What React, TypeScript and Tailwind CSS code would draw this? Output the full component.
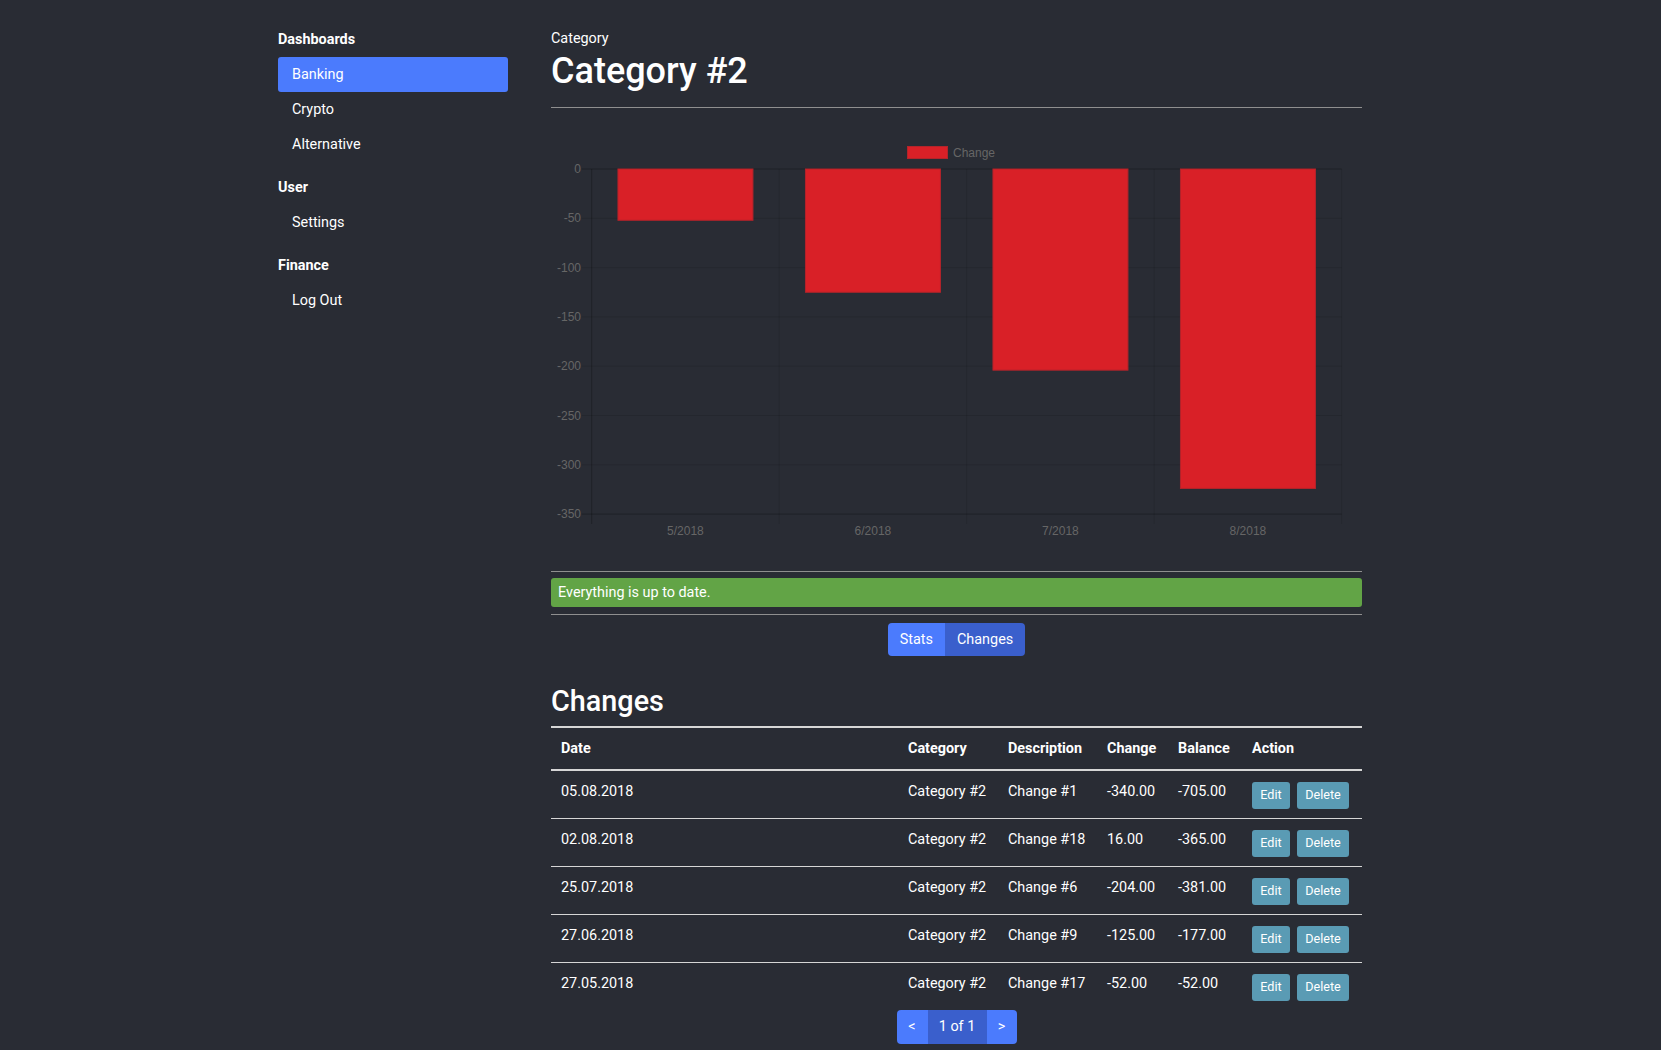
import React from "react";

const NAV = [
  { title: "Dashboards", links: ["Banking", "Crypto", "Alternative"] },
  { title: "User", links: ["Settings"] },
  { title: "Finance", links: ["Log Out"] },
];

const MONTHS = [
  { label: "5/2018", value: -52 },
  { label: "6/2018", value: -125 },
  { label: "7/2018", value: -204 },
  { label: "8/2018", value: -324 },
];

const ROWS = [
  { date: "05.08.2018", desc: "Change #1", change: "-340.00", balance: "-705.00" },
  { date: "02.08.2018", desc: "Change #18", change: "16.00", balance: "-365.00" },
  { date: "25.07.2018", desc: "Change #6", change: "-204.00", balance: "-381.00" },
  { date: "27.06.2018", desc: "Change #9", change: "-125.00", balance: "-177.00" },
  { date: "27.05.2018", desc: "Change #17", change: "-52.00", balance: "-52.00" },
];

function Sidebar() {
  return (
    <aside className="w-[230px] shrink-0 mt-px">
      {NAV.map((sec, i) => (
        <div key={sec.title} className={i > 0 ? "mt-[16px]" : ""}>
          <div className="h-5 leading-5 text-[14.4px] font-bold mb-[7px]">{sec.title}</div>
          {sec.links.map((l) => (
            <div
              key={l}
              className={`h-[35px] pt-px px-[14px] flex items-center rounded-[3px] text-[14.4px] ${
                l === "Banking" ? "bg-[#4b7bfd]" : ""
              }`}
            >
              {l}
            </div>
          ))}
        </div>
      ))}
    </aside>
  );
}

function Chart() {
  const x0 = 40.7;
  const cw = 187.5;
  const zero = 39;
  const k = 0.986;
  const ticks = [0, -50, -100, -150, -200, -250, -300, -350];
  return (
    <svg width="811" height="415" className="block" style={{ fontFamily: "'Liberation Sans', Arial, sans-serif" }}>
      {/* legend */}
      <rect x="356.5" y="16.5" width="40" height="12" fill="#d92027" stroke="#b3242a" />
      <text x="402" y="27" fontSize="12" fill="#666">Change</text>

      {/* horizontal grid */}
      {ticks.map((t) => {
        const y = zero - t * k;
        return (
          <g key={t}>
            <line
              x1={x0 - 10}
              x2={x0 + cw * 4}
              y1={y}
              y2={y}
              stroke={t === 0 || t === -350 ? "rgba(0,0,0,0.25)" : "rgba(0,0,0,0.1)"}
            />
            <text x="30" y={y + 4} fontSize="12" fill="#666" textAnchor="end">
              {t}
            </text>
          </g>
        );
      })}

      {/* vertical grid */}
      {[0, 1, 2, 3, 4].map((i) => (
        <line
          key={i}
          x1={x0 + cw * i}
          x2={x0 + cw * i}
          y1={zero}
          y2={zero + 355}
          stroke={i === 0 ? "rgba(0,0,0,0.25)" : "rgba(0,0,0,0.1)"}
        />
      ))}

      {MONTHS.map((m, i) => {
        const bx = x0 + cw * i + 26.25;
        const h = -m.value * k;
        return (
          <g key={m.label}>
            <rect x={bx} y={zero} width="135" height={h} fill="#d92027" stroke="#b3242a" />
            <text x={x0 + cw * i + cw / 2} y="405" fontSize="12" fill="#666" textAnchor="middle">
              {m.label}
            </text>
          </g>
        );
      })}
    </svg>
  );
}

function ChangesTable() {
  return (
    <table className="w-full table-fixed border-collapse text-[14.4px] border-t-2 border-[#d6d6d6]">
      <colgroup>
        <col className="w-[347px]" />
        <col className="w-[100px]" />
        <col className="w-[99px]" />
        <col className="w-[71px]" />
        <col className="w-[74px]" />
        <col />
      </colgroup>
      <thead>
        <tr className="border-b-2 border-[#d6d6d6]">
          {["Date", "Category", "Description", "Change", "Balance", "Action"].map((h) => (
            <th key={h} className="h-[43px] px-[10px] text-left font-bold whitespace-nowrap">
              {h}
            </th>
          ))}
        </tr>
      </thead>
      <tbody>
        {ROWS.map((r, i) => (
          <tr key={r.date} className={i < ROWS.length - 1 ? "border-b border-[#d6d6d6]" : ""}>
            <td className="align-top px-[10px] pt-[9px] leading-6">{r.date}</td>
            <td className="align-top px-[10px] pt-[9px] leading-6 whitespace-nowrap">Category #2</td>
            <td className="align-top px-[10px] pt-[9px] leading-6 whitespace-nowrap">{r.desc}</td>
            <td className="align-top px-[10px] pt-[9px] leading-6">{r.change}</td>
            <td className="align-top px-[10px] pt-[9px] leading-6">{r.balance}</td>
            <td className="align-top px-[10px] pt-[11px] pb-[9px]">
              <div className="flex gap-[7px]">
                <button className="h-[27px] w-[38px] rounded-[3px] bg-[#5a9bb4] text-[12.6px] text-white">Edit</button>
                <button className="h-[27px] w-[52px] rounded-[3px] bg-[#5a9bb4] text-[12.6px] text-white">Delete</button>
              </div>
            </td>
          </tr>
        ))}
      </tbody>
    </table>
  );
}

export default function App() {
  return (
    <div className="min-h-screen bg-[#292c34] text-white font-['Roboto',sans-serif]">
      <div className="flex pl-[278px] pt-[29px]">
        <Sidebar />
        <main className="ml-[43px] w-[811px]">
          <div className="h-5 leading-5 text-[14.4px]">Category</div>
          <h1 className="mt-[1px] text-[36px] leading-[43px] font-medium">Category #2</h1>
          <hr className="mt-[14px] border-0 border-t border-[#8f8f8f]" />
          <div className="mt-[22px]">
            <Chart />
          </div>
          <hr className="mt-[26px] border-0 border-t border-[#8f8f8f]" />
          <div className="mt-[6px] h-[29px] flex items-center px-[7px] rounded-[3px] bg-[#62a446] text-[14.4px]">
            Everything is up to date.
          </div>
          <hr className="mt-[7px] border-0 border-t border-[#8f8f8f]" />
          <div className="mt-[8px] flex justify-center">
            <div className="flex h-[33px] rounded-[4px] overflow-hidden text-[14.4px]">
              <button className="px-3 bg-[#4b7bfd] text-white">Stats</button>
              <button className="px-3 bg-[#3a5fcc] text-white">Changes</button>
            </div>
          </div>
          <h2 className="mt-[28px] text-[28.8px] leading-[35px] font-medium">Changes</h2>
          <div className="mt-[7px]">
            <ChangesTable />
          </div>
          <div className="flex justify-center pb-2">
            <div className="flex h-[34px] rounded-[4px] overflow-hidden text-[14.4px]">
              <button className="w-[31px] bg-[#4b7bfd] text-white">&lt;</button>
              <div className="w-[59px] flex items-center justify-center bg-[#3a5fcc]">1 of 1</div>
              <button className="w-[30px] bg-[#4b7bfd] text-white">&gt;</button>
            </div>
          </div>
        </main>
      </div>
    </div>
  );
}
